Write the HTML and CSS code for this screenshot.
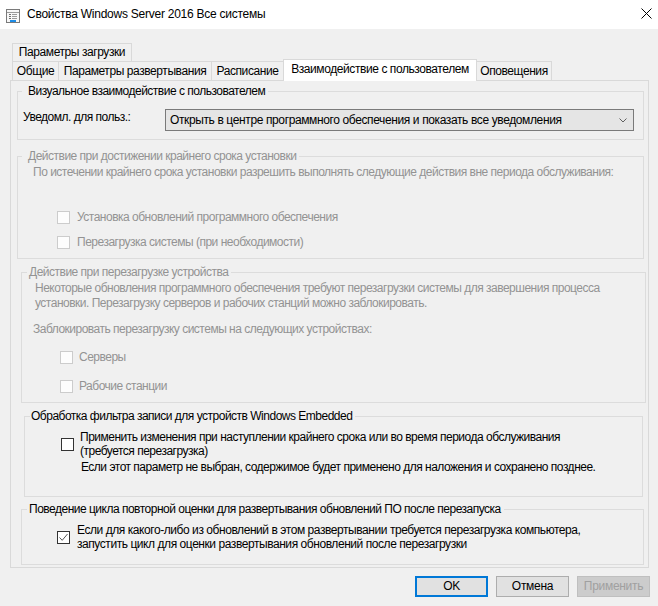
FILE: index.html
```html
<!DOCTYPE html>
<html lang="ru">
<head>
<meta charset="utf-8">
<title>Свойства Windows Server 2016 Все системы</title>
<link rel="stylesheet" href="styles.css">
</head>
<body>
<div class="window">
  <header class="titlebar">
    <svg class="app-icon" width="14" height="14" viewBox="0 0 14 14">
      <rect x="0.5" y="0.5" width="13" height="13" fill="#f7f7f7" stroke="#7a7a7a"/>
      <line x1="1" y1="3.5" x2="13" y2="3.5" stroke="#9a9a9a"/>
      <rect x="3" y="5" width="2" height="1" fill="#6d6d6d"/>
      <rect x="6" y="5" width="5" height="1" fill="#9a9a9a"/>
      <rect x="3" y="7" width="2" height="1" fill="#6d6d6d"/>
      <rect x="6" y="7" width="5" height="1" fill="#9a9a9a"/>
      <rect x="3" y="9" width="2" height="1" fill="#6d6d6d"/>
      <rect x="6" y="9" width="5" height="1" fill="#9a9a9a"/>
      <rect x="4" y="11" width="6" height="2" fill="#1e8ce6"/>
    </svg>
    <span class="title">Свойства Windows Server 2016 Все системы</span>
    <svg class="close" width="11" height="11" viewBox="0 0 11 11">
      <path d="M0.5 0.5 L10.5 10.5 M10.5 0.5 L0.5 10.5" stroke="#000" stroke-width="1" fill="none"/>
    </svg>
  </header>

  <main class="client">
    <nav class="tabs">
      <div class="tab-row">
        <div class="tab tab-boot">Параметры загрузки</div>
      </div>
      <div class="tab-row tab-row-front">
        <div class="tab tab-general">Общие</div>
        <div class="tab tab-deploy">Параметры развертывания</div>
        <div class="tab tab-schedule">Расписание</div>
        <div class="tab tab-user active">Взаимодействие с пользователем</div>
        <div class="tab tab-alerts">Оповещения</div>
      </div>
    </nav>

    <section class="panel">
      <div class="group g1">
        <div class="legend legend-wide">Визуальное взаимодействие с пользователем</div>
        <div class="combo-row">
          <span class="combo-label">Уведомл. для польз.:</span>
          <div class="combo">
            <span>Открыть в центре программного обеспечения и показать все уведомления</span>
            <svg class="chevron" width="8" height="5" viewBox="0 0 8 5">
              <path d="M0.5 0.5 L4 4 L7.5 0.5" stroke="#606060" fill="none"/>
            </svg>
          </div>
        </div>
      </div>

      <div class="group g2 disabled">
        <div class="legend legend-wide">Действие при достижении крайнего срока установки</div>
        <p class="note g2-note">По истечении крайнего срока установки разрешить выполнять следующие действия вне периода обслуживания:</p>
        <div class="check-row g2-row1"><span class="box"></span><span>Установка обновлений программного обеспечения</span></div>
        <div class="check-row g2-row2"><span class="box"></span><span>Перезагрузка системы (при необходимости)</span></div>
      </div>

      <div class="group g3 disabled">
        <div class="legend legend-g3">Действие при перезагрузке устройства</div>
        <p class="note g3-note">Некоторые обновления программного обеспечения требуют перезагрузки системы для завершения процесса<br>установки. Перезагрузку серверов и рабочих станций можно заблокировать.</p>
        <p class="note g3-note2">Заблокировать перезагрузку системы на следующих устройствах:</p>
        <div class="check-row g3-row1"><span class="box"></span><span>Серверы</span></div>
        <div class="check-row g3-row2"><span class="box"></span><span>Рабочие станции</span></div>
      </div>

      <div class="group g4">
        <div class="legend legend-g4">Обработка фильтра записи для устройств Windows Embedded</div>
        <div class="check-row multi g4-row"><span class="box"></span><span>Применить изменения при наступлении крайнего срока или во время периода обслуживания<br>(требуется перезагрузка)</span></div>
        <p class="note g4-note">Если этот параметр не выбран, содержимое будет применено для наложения и сохранено позднее.</p>
      </div>

      <div class="group g5">
        <div class="legend legend-g5">Поведение цикла повторной оценки для развертывания обновлений ПО после перезапуска</div>
        <div class="check-row multi g5-row">
          <span class="box checked">
            <svg width="11" height="11" viewBox="0 0 11 11"><path d="M1.5 5.5 L4.2 8.3 L9.5 2" stroke="#555" stroke-width="1" fill="none"/></svg>
          </span>
          <span class="g5-label">Если для какого-либо из обновлений в этом развертывании требуется перезагрузка компьютера,<br>запустить цикл для оценки развертывания обновлений после перезагрузки</span>
        </div>
      </div>
    </section>

    <div class="buttons">
      <button class="btn btn-default">OK</button>
      <button class="btn">Отмена</button>
      <button class="btn btn-disabled">Применить</button>
    </div>
  </main>
</div>
</body>
</html>
```

FILE: styles.css
```css
* { box-sizing: border-box; }

html, body {
  margin: 0;
  padding: 0;
}

body {
  width: 658px;
  height: 606px;
  overflow: hidden;
  background: #f0f0f0;
  font-family: "Liberation Sans", Arial, sans-serif;
  font-size: 12px;
  letter-spacing: -0.5px;
  color: #000;
}

.titlebar {
  height: 29px;
  background: #fff;
  display: flex;
  align-items: center;
}

.app-icon {
  align-self: flex-start;
  margin: 9px 0 0 6px;
  flex: none;
}

.title {
  margin-left: 7px;
  line-height: 15px;
  letter-spacing: -0.25px;
}

.close {
  align-self: flex-start;
  margin: 8px 6px 0 auto;
  flex: none;
}

.client {
  padding-top: 14px;
}

/* tabs */
.tab-row {
  display: flex;
  align-items: flex-start;
  padding-left: 12px;
}

.tab {
  height: 18px;
  line-height: 17px;
  border: 1px solid #d9d9d9;
  border-bottom: none;
  margin-right: -1px;
  text-align: center;
  white-space: nowrap;
  background: #f0f0f0;
  letter-spacing: -0.42px;
}

.tab-row-front .tab {
  height: 19px;
  line-height: 18px;
}

.tab-boot { width: 120px; }
.tab-general { width: 47px; }
.tab-deploy { width: 154px; }
.tab-schedule { width: 73px; }
.tab-user { width: 194px; }
.tab-alerts { width: 76px; }

.tab-row-front .tab.active {
  position: relative;
  z-index: 1;
  height: 22px;
  margin-top: -2px;
  margin-bottom: -1px;
  line-height: 18px;
  background: #fff;
}

/* panel */
.panel {
  margin-left: 10px;
  width: 639px;
  height: 488px;
  border: 1px solid #d9d9d9;
  background: #f0f0f0;
}

.group {
  border: 1px solid #dcdcdc;
}

.g1 { margin: 10px 0 0 6px; width: 627px; height: 49px; }
.g2 { margin: 16px 0 0 6px; width: 627px; height: 103px; }
.g3 { margin: 13px 0 0 10px; width: 625px; height: 131px; }
.g4 { margin: 13px 0 0 13px; width: 619px; height: 81px; }
.g5 { margin: 12px 0 0 10px; width: 623px; height: 56px; }

.legend {
  width: fit-content;
  height: 15px;
  line-height: 15px;
  margin-top: -8px;
  background: #f0f0f0;
  white-space: nowrap;
}

.legend-wide { margin-left: 4px; padding: 0 3px 0 6px; }
.legend-g3 { margin-left: 5px; padding: 0 3px 0 2px; }
.legend-g4 { margin-left: 5px; padding: 0 3px 0 1px; }
.legend-g5 { margin-left: 5px; padding: 0 3px 0 2px; }

.disabled { color: #939393; }

.combo-row {
  display: flex;
  align-items: flex-start;
  margin-top: 10px;
  padding-left: 5px;
}

.combo-label {
  flex: 0 0 142px;
  line-height: 15px;
  margin-top: 1px;
}

.combo {
  width: 469px;
  height: 22px;
  border: 1px solid #7a7a7a;
  background: #e5e5e5;
  display: flex;
  align-items: center;
  justify-content: space-between;
  padding: 0 6px 0 4px;
  line-height: 20px;
  white-space: nowrap;
  letter-spacing: -0.38px;
}

.chevron { flex: none; }

.note {
  margin: 0;
  line-height: 15px;
  white-space: nowrap;
}

.g2-note { margin-top: 1px; padding-left: 15px; }
.g3-note { margin-top: 1px; padding-left: 13px; line-height: 14.5px; }
.g3-note2 { margin-top: 12px; padding-left: 11px; }
.g4-note { margin-top: 2px; padding-left: 56px; line-height: 14px; }

.check-row {
  display: flex;
  align-items: center;
  line-height: 15px;
  white-space: nowrap;
}

.check-row.multi { line-height: 14px; }

.g5-label { letter-spacing: -0.44px; }

.box {
  flex: none;
  width: 13px;
  height: 13px;
  border: 1px solid #cccccc;
  background: #fdfdfd;
  display: flex;
  align-items: center;
  justify-content: center;
}

.g4 .box, .g5 .box {
  border-color: #333333;
  background: #fff;
}

.g2-row1, .g2-row2 { padding-left: 39px; gap: 7px; }
.g2-row1 { margin-top: 30px; }
.g2-row2 { margin-top: 10px; }

.g3-row1, .g3-row2 { padding-left: 38px; gap: 6px; }
.g3-row1 { margin-top: 13px; }
.g3-row2 { margin-top: 14px; }

.g4-row { margin-top: 6px; padding-left: 36px; gap: 6px; }
.g5-row { margin-top: 6px; padding-left: 35px; gap: 7px; }

/* buttons */
.buttons {
  display: flex;
  justify-content: flex-end;
  gap: 8px;
  margin-top: 8px;
  padding-right: 8px;
}

.btn {
  width: 73px;
  height: 21px;
  margin: 0;
  padding: 0;
  border: 1px solid #adadad;
  background: #e1e1e1;
  font-family: inherit;
  font-size: 12px;
  letter-spacing: -0.3px;
  color: #000;
  line-height: 17px;
}

.btn-default {
  border: 2px solid #0078d7;
}

.btn-disabled {
  border-color: #bfbfbf;
  background: #cccccc;
  color: #a0a0a0;
}
```
